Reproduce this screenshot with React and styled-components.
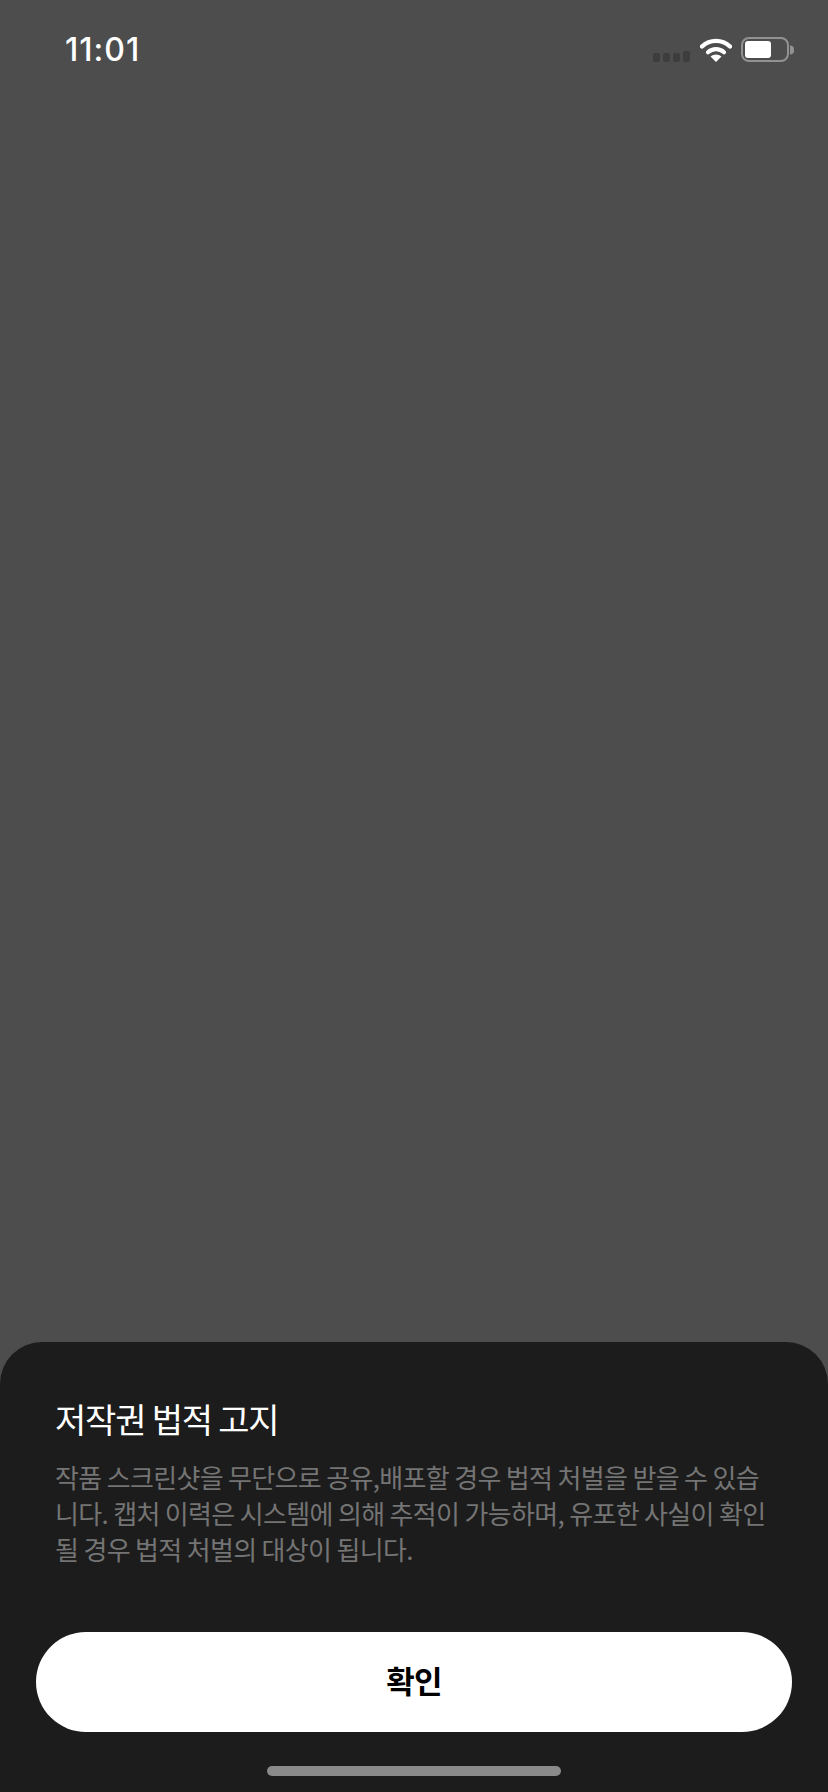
import React from "react";
import styled, { createGlobalStyle } from "styled-components";

const GlobalStyle = createGlobalStyle`
  html, body {
    margin: 0;
    padding: 0;
    background: #4d4d4d;
  }
  * {
    box-sizing: border-box;
  }
`;

const KR = `"Noto Sans CJK KR", "Noto Sans", sans-serif`;

const Page = styled.div`
  display: flex;
  flex-direction: column;
  justify-content: space-between;
  height: 100vh;
  min-height: 1792px;
  overflow: hidden;
  background: #4d4d4d;
`;

const StatusBar = styled.div`
  display: flex;
  align-items: center;
  justify-content: space-between;
  height: 99px;
  padding: 0 39px 0 65px;
`;

const Time = styled.span`
  font-family: Inter, "Liberation Sans", sans-serif;
  font-size: 32px;
  font-weight: 500;
  letter-spacing: 1px;
  color: #fff;
`;

const Indicators = styled.div`
  display: flex;
  align-items: center;
  gap: 9px;
`;

const Signal = styled.div`
  display: flex;
  align-items: flex-end;
  gap: 3px;
  height: 25px;
  margin-right: 1px;
`;

const Dot = styled.i`
  display: block;
  width: 7px;
  height: ${(p) => p.$h}px;
  border-radius: 2px;
  background: #3d3d3d;
`;

const Battery = styled.div`
  position: relative;
  width: 48px;
  height: 25px;
  padding: 2px;
  border: 2px solid #929292;
  border-radius: 8px;
`;

const BatteryFill = styled.div`
  width: 26px;
  height: 100%;
  border-radius: 3px;
  background: #fff;
`;

const BatteryNib = styled.div`
  position: absolute;
  top: 50%;
  right: -7px;
  width: 4px;
  height: 9px;
  transform: translateY(-50%);
  border-radius: 0 4px 4px 0;
  background: #929292;
`;

const Sheet = styled.section`
  display: flex;
  flex-direction: column;
  height: 450px;
  border-radius: 42px 42px 0 0;
  background: #1c1c1c;
`;

const Copy = styled.div`
  height: 290px;
  padding: 55px 48px 0 55px;
`;

const Title = styled.h2`
  margin: 0 0 18px;
  font-family: ${KR};
  font-size: 34px;
  font-weight: 400;
  letter-spacing: -1.2px;
  line-height: 44px;
  color: #fff;
`;

const Body = styled.p`
  margin: 0;
  font-family: ${KR};
  font-size: 26px;
  font-weight: 400;
  letter-spacing: -0.67px;
  line-height: 36px;
  word-break: break-all;
  color: #747474;
`;

const ConfirmButton = styled.button`
  display: block;
  width: 756px;
  height: 100px;
  margin: 0 auto;
  padding: 0 0 5px;
  border: 0;
  border-radius: 50px;
  font-family: ${KR};
  font-size: 31px;
  font-weight: 700;
  letter-spacing: -0.8px;
  color: #000;
  background: #fff;
`;

const HomeBar = styled.div`
  width: 294px;
  height: 10px;
  margin: 34px auto 0;
  border-radius: 5px;
  background: #8a8a8a;
`;

function WifiIcon() {
  return (
    <svg width="32" height="25" viewBox="0 0 32 25" fill="none">
      <path d="M2 9.5C10 2 22 2 30 9.5" stroke="#fff" strokeWidth="4.4" strokeLinecap="round" />
      <path d="M8 15.2C12.5 11 19.5 11 24 15.2" stroke="#fff" strokeWidth="4.2" strokeLinecap="round" />
      <path d="M16 25L10.5 19.5C13.5 16.8 18.5 16.8 21.5 19.5Z" fill="#fff" />
    </svg>
  );
}

export default function App() {
  return (
    <>
      <GlobalStyle />
      <Page>
        <StatusBar>
          <Time>11:01</Time>
          <Indicators>
            <Signal>
              {[9, 9, 9, 11].map((h, i) => (
                <Dot key={i} $h={h} />
              ))}
            </Signal>
            <WifiIcon />
            <Battery>
              <BatteryFill />
              <BatteryNib />
            </Battery>
          </Indicators>
        </StatusBar>
        <Sheet>
          <Copy>
            <Title>저작권 법적 고지</Title>
            <Body>
              작품 스크린샷을 무단으로 공유,배포할 경우 법적 처벌을 받을 수 있습니다. 캡처 이력은
              시스템에 의해 추적이 가능하며, 유포한 사실이 확인될 경우 법적 처벌의 대상이 됩니다.
            </Body>
          </Copy>
          <ConfirmButton>확인</ConfirmButton>
          <HomeBar />
        </Sheet>
      </Page>
    </>
  );
}
